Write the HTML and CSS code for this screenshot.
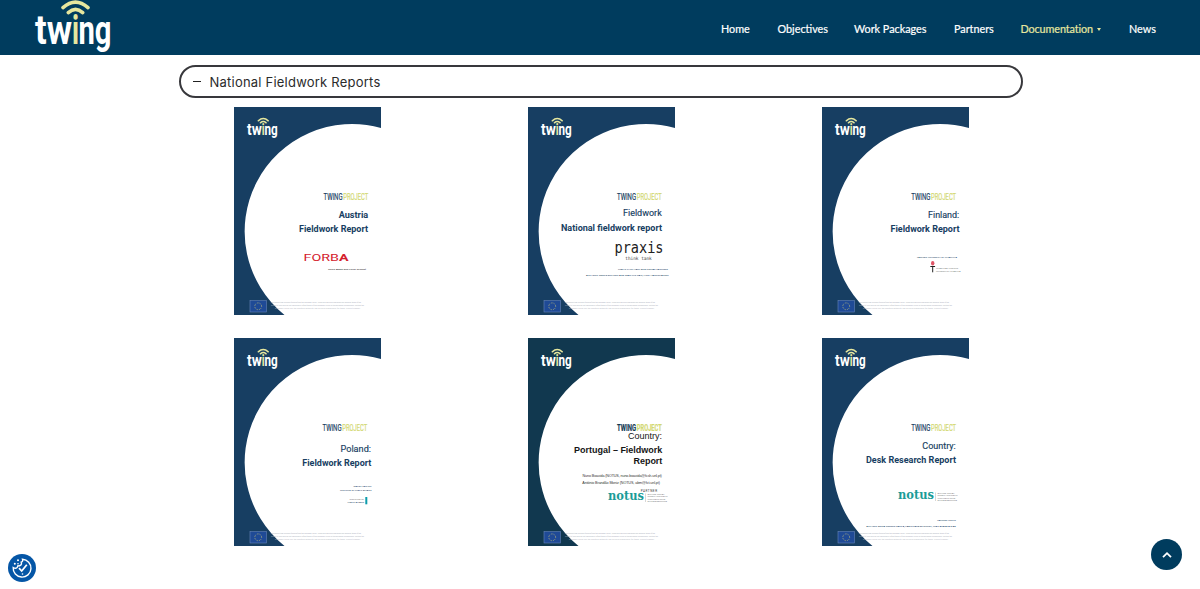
FILE: index.html
```html
<!DOCTYPE html>
<html lang="en">
  <head>
    <meta charset="utf-8" />
    <title>Twing - Documentation</title>
    <meta name="viewport" content="width=device-width, initial-scale=1.0" />
    <link rel="stylesheet" href="styles.css">
  </head>
  <body>
    <!-- shared artwork -->
    <svg class="defs" width="0" height="0" aria-hidden="true">
      <symbol id="twing" viewBox="0 0 76 55">
        <text class="logo-text" x="0" y="43.500" textLength="37" lengthAdjust="spacingAndGlyphs">tw</text>
        <text class="logo-text logo-i" x="37" y="43.500" textLength="7" lengthAdjust="spacingAndGlyphs">i</text>
        <text class="logo-text" x="43.500" y="43.500" textLength="33" lengthAdjust="spacingAndGlyphs">ng</text>
        <path class="logo-wave" d="M28 7.600Q40.500 -3.500 53 7.600M33.300 12.600Q40.500 6.200 47.700 12.600" />
      </symbol>
      <symbol id="flag" viewBox="0 0 17 12">
        <rect class="flag-bg" x="0.3" y="0.3" width="16.400" height="11.400" />
        <circle class="flag-stars" cx="8.5" cy="6" r="3.400" />
      </symbol>
      <symbol id="frame" viewBox="0 0 147 208">
        <path d="M0 0H147V20.900A107.500 107.500 0 0 0 50.500 208H0Z" />
        <use href="#twing" x="13" y="10.800" width="30.500" height="22" />
        <use href="#flag" x="15.700" y="193.300" width="17" height="12" />
        <g class="funding">
          <text x="37" y="196.300" textLength="90">This project has received funding from the European Union. Views and opinions expressed are however those of the</text>
          <text x="37" y="199" textLength="93">author(s) only and do not necessarily reflect those of the European Union or the European Commission. Neither the</text>
          <text x="41" y="201.700" textLength="85">European Union nor the granting authority can be held responsible for them. Project number</text>
        </g>
      </symbol>
      <symbol id="project" viewBox="0 0 46 9">
        <text class="brand" x="0" y="7.500" textLength="19" lengthAdjust="spacingAndGlyphs">TWING</text>
        <text class="brand lime" x="19.800" y="7.500" textLength="25" lengthAdjust="spacingAndGlyphs">PROJECT</text>
      </symbol>
      <symbol id="notus" viewBox="0 0 63 12">
        <text class="notus" x="0" y="8" textLength="36" lengthAdjust="spacingAndGlyphs">notus</text>
        <path class="divider" d="M37.500 1.500V10" />
        <g class="caption">
          <text x="39.500" y="3" textLength="17" lengthAdjust="spacingAndGlyphs">APPLIED SOCIAL</text>
          <text x="39.500" y="5.300" textLength="20" lengthAdjust="spacingAndGlyphs">RESEARCH COOPERATIVE</text>
          <text x="39.500" y="7.600" textLength="18" lengthAdjust="spacingAndGlyphs">INVESTIGACIO SOCIAL</text>
          <text x="39.500" y="9.900" textLength="19.500" lengthAdjust="spacingAndGlyphs">APLICADA BARCELONA</text>
        </g>
      </symbol>
    </svg>

    <header class="navbar">
      <a class="brand-link" href="#"><svg class="logo" viewBox="0 0 76 55"><use href="#twing" width="76" height="55" /></svg></a>
      <nav class="menu">
        <a class="home" href="#">Home</a>
        <a class="objectives" href="#">Objectives</a>
        <a class="packages" href="#">Work Packages</a>
        <a class="partners" href="#">Partners</a>
        <a class="documentation active" href="#">Documentation<span class="caret"></span></a>
        <a class="news" href="#">News</a>
      </nav>
    </header>

    <main>
      <div class="toggle">
        <span class="minus"></span>
        <span class="toggle-title">National Fieldwork Reports</span>
      </div>

      <div class="reports">
        <a href="#"><svg class="cover" viewBox="0 0 147 208">
          <use href="#frame" width="147" height="208" />
          <use href="#project" x="89.500" y="85.500" width="46" height="9" />
          <text class="title" x="104.700" y="110.700" textLength="29.500" lengthAdjust="spacingAndGlyphs">Austria</text>
          <text class="title" x="65" y="125" textLength="69" lengthAdjust="spacingAndGlyphs">Fieldwork Report</text>
          <text class="forba" x="69.500" y="154" textLength="45" lengthAdjust="spacingAndGlyphs">FORB<tspan class="bold">A</tspan></text>
          <text class="tiny black" x="94" y="163" textLength="38" lengthAdjust="spacingAndGlyphs">Georg Adam and Philip Schörpf</text>
        </svg></a>

        <a href="#"><svg class="cover" viewBox="0 0 147 208">
          <use href="#frame" width="147" height="208" />
          <use href="#project" x="89" y="85.500" width="46" height="9" />
          <text class="country" x="95" y="109" textLength="38.700" lengthAdjust="spacingAndGlyphs">Fieldwork</text>
          <text class="title" x="33" y="124" textLength="101" lengthAdjust="spacingAndGlyphs">National fieldwork report</text>
          <text class="praxis" x="86.500" y="146" textLength="49" lengthAdjust="spacingAndGlyphs">praxis</text>
          <text class="think" x="97.300" y="153.300" textLength="26.500">think tank</text>
          <text class="tiny" x="90" y="162.700" textLength="50" lengthAdjust="spacingAndGlyphs">PRAXIS THINK TANK AND CENTAR PARTNERS</text>
          <text class="tiny" x="58" y="168.500" textLength="82.500" lengthAdjust="spacingAndGlyphs">AUTHORS: MERLE ERIKSON AND MARI-LIIS RÄIS, KIRSI HANNOLAINEN</text>
        </svg></a>

        <a href="#"><svg class="cover" viewBox="0 0 147 208">
          <use href="#frame" width="147" height="208" />
          <use href="#project" x="89.300" y="85.500" width="46" height="9" />
          <text class="country" x="106" y="110.500" textLength="31.300" lengthAdjust="spacingAndGlyphs">Finland:</text>
          <text class="title" x="68.500" y="125" textLength="69" lengthAdjust="spacingAndGlyphs">Fieldwork Report</text>
          <text class="tiny" x="95" y="151" textLength="40" lengthAdjust="spacingAndGlyphs">PARTNER: UNIVERSITY OF JYVÄSKYLÄ</text>
          <path class="torch" d="M108.300 159.500H113.100M110.700 159.500V165.300" />
          <ellipse class="flame" cx="110.700" cy="156.300" rx="1.700" ry="2.200" />
          <text class="tiny gray" x="114" y="162" textLength="22" lengthAdjust="spacingAndGlyphs">JYVÄSKYLÄN YLIOPISTO</text>
          <text class="tiny gray" x="114" y="164.500" textLength="24.500" lengthAdjust="spacingAndGlyphs">UNIVERSITY OF JYVÄSKYLÄ</text>
        </svg></a>

        <a href="#"><svg class="cover" viewBox="0 0 147 208">
          <use href="#frame" width="147" height="208" />
          <use href="#project" x="88.500" y="85.800" width="46" height="9" />
          <text class="country" x="106.500" y="113.700" textLength="30.500" lengthAdjust="spacingAndGlyphs">Poland:</text>
          <text class="title" x="68.300" y="128.400" textLength="69" lengthAdjust="spacingAndGlyphs">Fieldwork Report</text>
          <text class="tiny" x="119.500" y="149" textLength="18" lengthAdjust="spacingAndGlyphs">MACIEJ PAŃKÓW</text>
          <text class="tiny" x="106" y="153" textLength="31.500" lengthAdjust="spacingAndGlyphs">INSTITUTE OF PUBLIC AFFAIRS</text>
          <text class="tiny gray" x="115.500" y="162" textLength="14.500" lengthAdjust="spacingAndGlyphs">INSTITUTE OF</text>
          <text class="tiny" x="113.500" y="164.500" textLength="16.500" lengthAdjust="spacingAndGlyphs">PUBLIC AFFAIRS</text>
          <rect class="teal" x="131.300" y="159" width="2" height="7.300" />
        </svg></a>

        <a href="#"><svg class="cover dark" viewBox="0 0 147 208">
          <use href="#frame" width="147" height="208" />
          <g class="heavy"><use href="#project" x="89" y="85.800" width="46" height="9" /></g>
          <text class="arial" x="100" y="101" textLength="34">Country:</text>
          <text class="arial bold" x="46" y="114.700" textLength="88.300">Portugal – Fieldwork</text>
          <text class="arial bold" x="105.500" y="126.300" textLength="28.800">Report</text>
          <text class="author" x="54.500" y="139" textLength="79.300">Nuno Boavida (NOTUS, nuno.boavida@fcsh.unl.pt)</text>
          <text class="author" x="54.300" y="146" textLength="77.700">António Brandão Moniz (NOTUS, abm@fct.unl.pt)</text>
          <text class="partner" x="112.700" y="153.500" textLength="16.300">PARTNER</text>
          <use href="#notus" x="80" y="154" width="63" height="12" />
        </svg></a>

        <a href="#"><svg class="cover" viewBox="0 0 147 208">
          <use href="#frame" width="147" height="208" />
          <use href="#project" x="89.300" y="85.800" width="46" height="9" />
          <text class="country" x="100.300" y="110.700" textLength="33.500" lengthAdjust="spacingAndGlyphs">Country:</text>
          <text class="title" x="44" y="125.400" textLength="90" lengthAdjust="spacingAndGlyphs">Desk Research Report</text>
          <use href="#notus" x="76" y="153" width="63" height="12" />
          <text class="tiny" x="115.300" y="183" textLength="18.500" lengthAdjust="spacingAndGlyphs">PARTNER: NOTUS</text>
          <text class="tiny" x="44.300" y="188.700" textLength="89.500" lengthAdjust="spacingAndGlyphs">AUTHORS: BERTA ROMERO GARCIA, PABLO SANZ DE MIGUEL, JUAN ARASANZ DIAZ</text>
        </svg></a>
      </div>
    </main>

    <button class="cookie" aria-label="Cookie settings">
      <svg viewBox="0 0 28 28">
        <path d="M14.500 5.300A8.900 8.900 0 1 1 5.200 13.500C7.500 15 9.500 14.300 9.700 12C12.500 12 14.300 10.500 13.200 8.200C14.700 7.600 15 6.500 14.500 5.300Z" />
        <path class="check" d="M11 14.200L13.700 17L18.800 10.800" />
        <circle cx="6.800" cy="9.800" r="1" />
        <circle cx="10" cy="6.300" r="1" />
        <circle cx="10" cy="9.800" r="0.800" />
        <circle cx="14.500" cy="20" r="0.800" />
      </svg>
    </button>
    <button class="to-top" aria-label="Back to top">
      <svg viewBox="0 0 12 8"><path d="M2 6.200L6 2.200L10 6.200" /></svg>
    </button>
  </body>
</html>
```
FILE: styles.css
```css
body {
  margin: 0;
  height: 589px;
  overflow: hidden;
  background: white;
  font-family: Lato, "Liberation Sans", sans-serif;
}
a {
  color: inherit;
  text-decoration: none;
}
.defs {
  position: absolute;
}
symbol {
  overflow: visible;
}

/* header */
.navbar {
  display: flex;
  justify-content: space-between;
  height: 55px;
  padding: 0 44.500px 0 35px;
  background: #003c5e;
}
.logo {
  display: block;
  width: 76px;
  height: 55px;
  overflow: visible;
}
.logo-text {
  font: bold 41px Roboto, sans-serif;
  fill: white;
}
.logo-i {
  fill: #e6e79e;
}
.logo-wave {
  fill: none;
  stroke: #e6e79e;
  stroke-width: 3.6;
  stroke-linecap: round;
}
.menu {
  display: flex;
  gap: 28px;
  color: white;
  font-size: 10.800px;
  -webkit-text-stroke: 0.2px;
  line-height: 57px;
  white-space: nowrap;
}
.home {
  width: 28.5px;
}
.objectives {
  width: 48.5px;
}
.packages {
  width: 72px;
}
.partners {
  width: 38.500px;
}
.documentation {
  width: 80.500px;
  letter-spacing: -0.1px;
}
.news {
  width: 26.500px;
}
.active {
  color: #e6e79e;
}
.caret {
  display: inline-block;
  margin-left: 4px;
  vertical-align: 2px;
  border-top: 3px solid;
  border-left: 2.500px solid transparent;
  border-right: 2.500px solid transparent;
}

/* accordion */
.toggle {
  box-sizing: border-box;
  display: flex;
  align-items: center;
  width: 844px;
  height: 33px;
  margin: 10px 0 0 179px;
  padding-left: 12px;
  border: 2px solid #38383c;
  border-radius: 17px;
}
.minus {
  width: 8px;
  height: 1.500px;
  margin-right: 8.500px;
  background: #222;
}
.toggle-title {
  color: #2b2b2b;
  font: 13px Inter, sans-serif;
  letter-spacing: 0.220px;
}
.reports {
  display: grid;
  grid-template-columns: repeat(3, 293.800px);
  row-gap: 22.500px;
  margin: 9px 0 0 160.600px;
  justify-items: center;
}
.cover {
  display: block;
  width: 147px;
  height: 208px;
  fill: #173e62;
  font-family: Roboto, sans-serif;
}
.dark {
  fill: #11384f;
}
.title {
  font-size: 9.400px;
  font-weight: 700;
}
.country {
  font-size: 9.400px;
  stroke: #173e62;
  stroke-width: 0.15;
}
.bold {
  font-weight: 700;
}
.brand {
  font-size: 9.300px;
  stroke: #173e62;
  stroke-width: 0.2;
}
.heavy {
  font-weight: 700;
}
.lime {
  fill: #d3d872;
  stroke: #d3d872;
}
.flag-bg {
  fill: #1f4a96;
  stroke: #6684b8;
  stroke-width: 0.6;
}
.flag-stars {
  fill: none;
  stroke: #b8b878;
  stroke-width: 0.9;
  stroke-dasharray: 0.8 0.98;
}
.funding {
  fill: #a9adb8;
  font-size: 1.700px;
}
.forba {
  fill: #d4202c;
  font-size: 9px;
}
.praxis {
  fill: #222;
  font: 15px "DejaVu Sans Mono", monospace;
}
.think {
  fill: #444;
  font: 4.500px "DejaVu Sans Mono", monospace;
}
.tiny {
  font-size: 2.300px;
}
.black {
  fill: #222;
  font-style: italic;
}
.gray {
  fill: #777;
}
.torch {
  fill: none;
  stroke: #222;
}
.flame {
  fill: #e05566;
}
.teal {
  fill: #0d9cac;
}
.arial {
  fill: #151515;
  font-family: "Liberation Sans", sans-serif;
  font-size: 9px;
}
.author {
  fill: #333;
  font: 3.700px "Liberation Sans", sans-serif;
}
.partner {
  fill: #333;
  font-size: 3px;
}
.notus {
  fill: #1a9c98;
  font: bold 12px "DejaVu Serif", serif;
}
.divider {
  stroke: #999;
  stroke-width: 0.4;
}
.caption {
  fill: #888;
  font-size: 2px;
}

/* floating buttons */
.cookie,
.to-top {
  position: fixed;
  display: flex;
  align-items: center;
  justify-content: center;
  padding: 0;
  border: 0;
  border-radius: 50%;
}
.cookie {
  left: 8px;
  bottom: 7px;
  width: 28px;
  height: 28px;
  background: #0556a6;
}
.cookie svg {
  width: 28px;
  fill: white;
}
.cookie path {
  fill: none;
  stroke: white;
  stroke-width: 1.400;
}
.cookie .check {
  stroke-width: 1.800;
}
.to-top {
  right: 18px;
  bottom: 19px;
  width: 31px;
  height: 31px;
  background: #003c5e;
}
.to-top svg {
  width: 12px;
  fill: none;
  stroke: white;
  stroke-width: 1.800;
}
```
